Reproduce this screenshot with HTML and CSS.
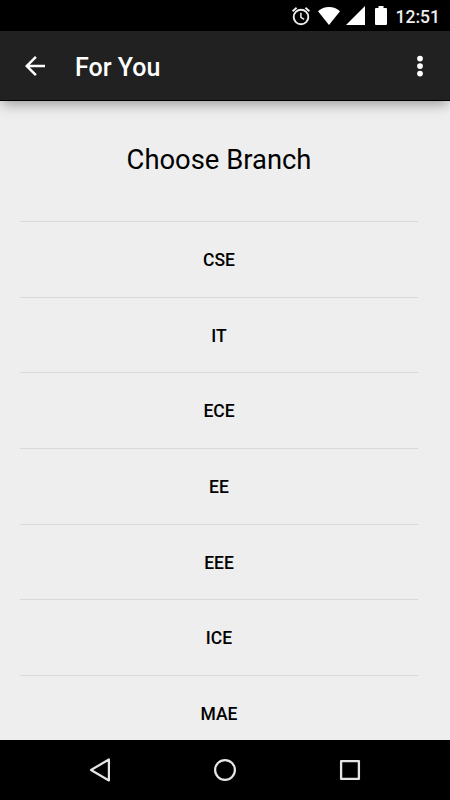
FILE: index.html
```html
<!DOCTYPE html>
<html lang="en">
<head>
    <meta charset="UTF-8">
    <meta name="viewport" content="width=device-width, initial-scale=1.0">
    <title>For You</title>
    <link rel="stylesheet" href="styles.css">
</head>
<body>
    <div class="screen">
        <div class="status-bar">
            <svg class="alarm" width="20" height="20" viewBox="0 0 20 20" fill="none" stroke="#eee">
                <circle cx="10" cy="11" r="7.3" stroke-width="1.9"/>
                <path d="M9.9 6.8v4.6l3.2 2" stroke-width="1.5"/>
                <path d="M1.6 5.2l4-3.4M18.4 5.2l-4-3.4" stroke-width="1.9"/>
            </svg>
            <svg class="wifi" width="22" height="18" viewBox="0 0 22 18" fill="#fff">
                <path d="M11 18L0 4.2C3 1.6 6.8 0 11 0s8 1.6 11 4.2z"/>
            </svg>
            <svg class="signal" width="19" height="19" viewBox="0 0 19 19" fill="#fff">
                <path d="M19 0v19H0z"/>
            </svg>
            <svg class="battery" width="12" height="19" viewBox="0 0 12 19" fill="#fff">
                <path d="M3.5 0h5v2H11q1 0 1 1v15q0 1-1 1H1q-1 0-1-1V3q0-1 1-1h2.5z"/>
            </svg>
            <span class="clock">12:51</span>
        </div>

        <header class="toolbar">
            <svg class="back" width="30" height="30" viewBox="0 0 24 24" fill="#fff">
                <path d="M20 11H7.83l5.59-5.59L12 4l-8 8 8 8 1.41-1.41L7.83 13H20v-2z"/>
            </svg>
            <h1>For You</h1>
            <svg class="more" width="30" height="30" viewBox="0 0 24 24" fill="#fff">
                <circle cx="12" cy="6" r="2.3"/>
                <circle cx="12" cy="12" r="2.3"/>
                <circle cx="12" cy="18" r="2.3"/>
            </svg>
        </header>

        <main class="content">
            <h2>Choose Branch</h2>
            <ul class="branches">
                <li>CSE</li>
                <li>IT</li>
                <li>ECE</li>
                <li>EE</li>
                <li>EEE</li>
                <li>ICE</li>
                <li>MAE</li>
            </ul>
        </main>

        <nav class="nav-bar">
            <svg width="30" height="30" viewBox="0 0 30 30" fill="none" stroke="#e6e6e6" stroke-width="2.2" stroke-linejoin="round">
                <path d="M23.9 4.5v21L6 15z"/>
            </svg>
            <svg width="30" height="30" viewBox="0 0 30 30" fill="none" stroke="#e6e6e6" stroke-width="2.2">
                <circle cx="15" cy="15" r="9.9"/>
            </svg>
            <svg width="30" height="30" viewBox="0 0 30 30" fill="none" stroke="#e6e6e6" stroke-width="2.3" stroke-linejoin="round">
                <rect x="6.1" y="6.1" width="17.8" height="17.8"/>
            </svg>
        </nav>
    </div>
</body>
</html>
```

FILE: styles.css
```css
body {
    margin: 0;
    font-family: Roboto, "Liberation Sans", sans-serif;
    background-color: #000;
}
.screen {
    display: flex;
    flex-direction: column;
    width: 450px;
    height: 800px;
    overflow: hidden;
}
svg {
    display: block;
    flex: none;
}
.status-bar {
    display: flex;
    align-items: flex-start;
    justify-content: flex-end;
    height: 31px;
    padding: 6px 10px 0 0;
    box-sizing: border-box;
    background: #000;
    color: #eee;
}
.alarm {
    margin-right: 7px;
}
.wifi {
    margin: 1px 6px 0 0;
}
.signal {
    margin-right: 10px;
}
.battery {
    margin-right: 9px;
}
.clock {
    font-size: 17.5px;
    font-weight: 500;
    line-height: 22px;
}
.toolbar {
    display: flex;
    align-items: center;
    height: 70px;
    padding: 0 15px 0 20px;
    box-sizing: border-box;
    background: #212121;
    border-bottom: 1px solid #000;
    box-shadow: 0 5px 12px -2px rgba(0, 0, 0, 0.36);
    z-index: 1;
}
.toolbar h1 {
    flex: 1;
    margin: 4px 0 0 25px;
    color: #fff;
    font-size: 25px;
    font-weight: 500;
    line-height: 30px;
}
.content {
    flex: 1;
    min-height: 0;
    padding: 0 32px 0 20px;
    background: #eee;
    overflow: hidden;
}
.content h2 {
    margin: 0;
    padding-top: 42px;
    height: 78px;
    font-size: 27.4px;
    font-weight: 400;
    line-height: 35px;
    text-align: center;
}
.branches {
    margin: 0;
    padding: 0;
    list-style: none;
}
.branches li {
    height: 75.65px;
    box-sizing: border-box;
    border-top: 1px solid #d8d8d8;
    font-size: 17.5px;
    font-weight: 500;
    line-height: 77px;
    text-align: center;
}
.nav-bar {
    display: flex;
    justify-content: space-between;
    align-items: center;
    height: 60px;
    padding: 0 85px;
    box-sizing: border-box;
    background: #000;
}
```
